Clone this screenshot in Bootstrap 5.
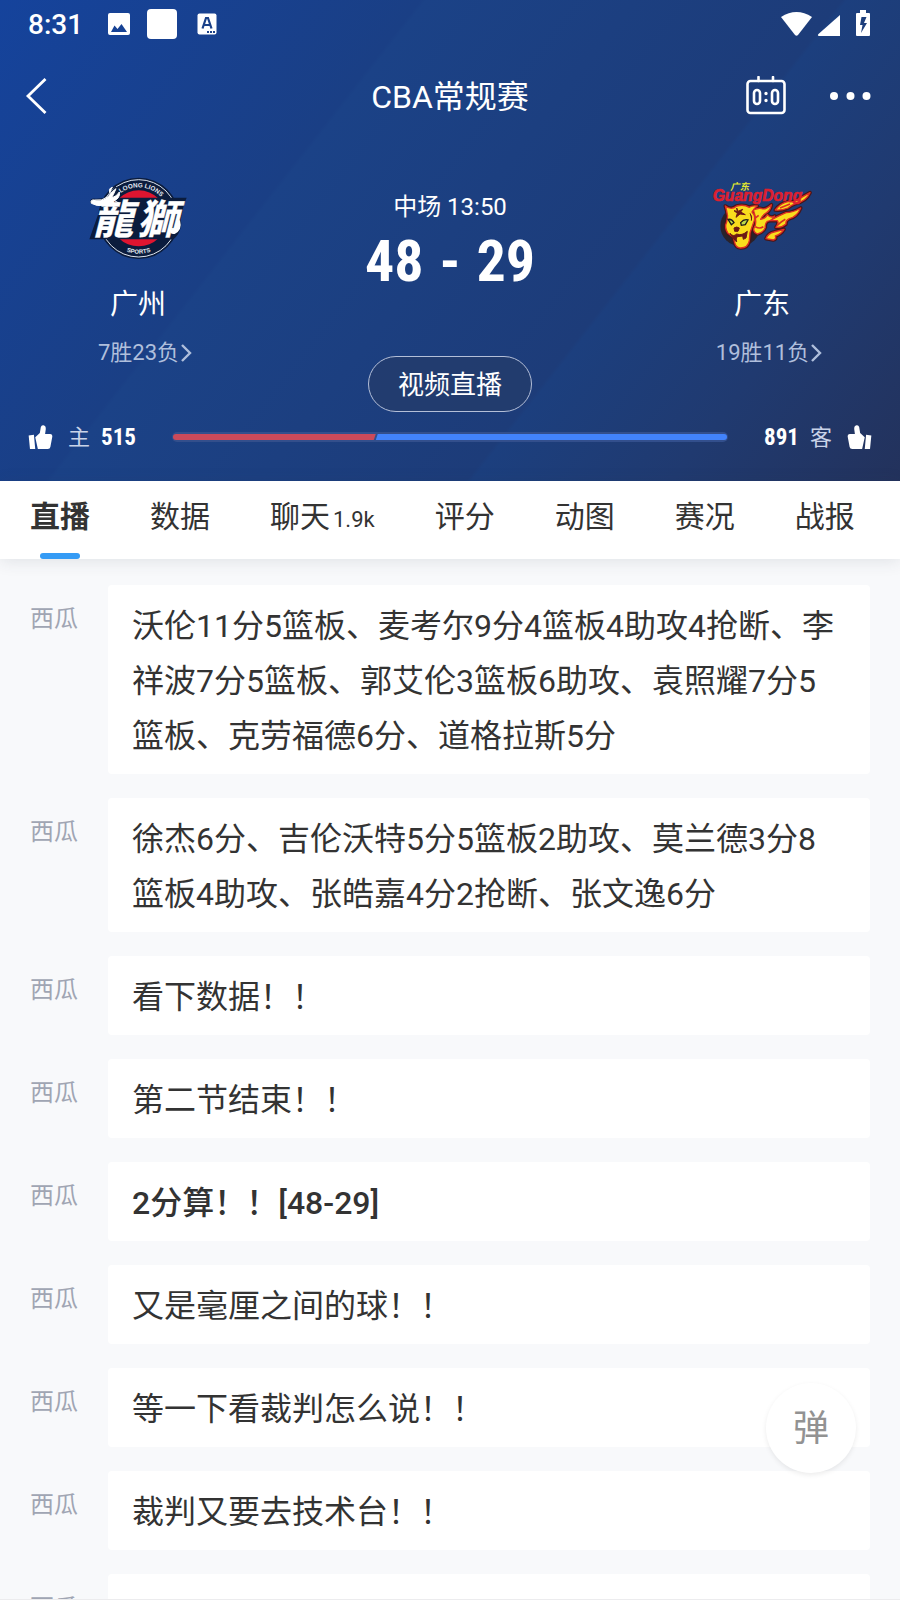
<!DOCTYPE html>
<html lang="zh-CN">
<head>
<meta charset="utf-8">
<meta name="viewport" content="width=device-width, initial-scale=1">
<title>CBA常规赛</title>
<link href="https://cdn.jsdelivr.net/npm/bootstrap@5.3.0/dist/css/bootstrap.min.css" rel="stylesheet">
<style>
  body { font-family: Roboto, "Noto Sans CJK SC", sans-serif; color: #333; background: #f8f9fb; }
  .match-head {
    background: linear-gradient(128deg, #15439c 0%, #1a3f85 33%, #1b4287 33.4%, #1d3c79 66%, #1c3f7e 66.4%, #203a70 82%, #23325c 100%);
  }
  .status-bar { height: 48px; padding: 0 30px 0 28px; }
  .clock { font-size: 28px; line-height: 32px; font-weight: 500; padding-top: 2px; }
  .app-mark { margin-left: 20px; }
  .title-bar { height: 98px; padding: 0 24px; }
  .title-bar h1 { font-size: 32px; line-height: 48px; }
  .title-side { flex: 1 1 0; }
  .icon-btn { background: none; border: 0; padding: 0; color: #fff; line-height: 0; }
  .title-bar .icon-btn { padding-bottom: 2px; }
  .score-btn { margin-right: 43px; }
  .more-btn { margin-right: 5px; }
  .versus { padding-top: 22px; }
  .team-col { width: 276px; }
  .team-name { font-size: 28px; line-height: 40px; margin-top: 17px; }
  .team-record { font-size: 22px; line-height: 32px; margin-top: 12px; padding-left: 14px; color: #b0bfdc; text-decoration: none; }
  .team-record svg { margin-left: 2px; }
  .period { font-size: 24px; line-height: 32px; padding-top: 23px; }
  .narrow-num { font-family: "Roboto Condensed", "Liberation Sans Narrow", sans-serif; font-weight: 700; }
  .score { font-size: 58px; line-height: 64px; margin-top: 6px; gap: 16px; }
  .video-btn {
    margin-top: 63px; width: 164px; height: 56px; padding: 1px 0 0; border-radius: 28px;
    border: 1px solid #b4bfd8; background: rgba(37, 60, 105, .7); color: #fff; font-size: 26px; line-height: 36px;
  }
  .video-btn:hover { background: #253c69; color: #fff; border-color: #fff; }
  .vote-row { margin-top: 8px; height: 34px; margin-bottom: 27px; }
  .vote-side { flex: 0 0 172px; padding-left: 28px; gap: 11px; font-size: 22px; line-height: 32px; }
  .vote-side.away { flex-direction: row-reverse; padding: 0 28px 0 0; }
  .vote-side .side-name { color: #c9d3e8; margin-left: 4px; padding-top: 1px; }
  .vote-side.away .side-name { margin: 0 4px 0 0; }
  .vote-side .narrow-num { font-size: 23px; padding-top: 1px; }
  .away .icon-btn svg { transform: scaleX(-1); }
  .vote-bar { height: 10px; padding: 2px 1px; border-radius: 5px; background: #334f8c; }
  .vote-home { background: #cb4a5a; border-radius: 3px 0 0 3px; clip-path: polygon(0 0, 100% 0, calc(100% - 2px) 100%, 0 100%); }
  .vote-away { background: #4283fb; border-radius: 0 3px 3px 0; clip-path: polygon(2px 0, 100% 0, 100% 100%, 0 100%); }
  .tab-strip { height: 78px; padding: 0 30px; gap: 60px; background: #fff; box-shadow: 0 2px 16px rgba(40, 55, 75, .12); z-index: 2; }
  .tab-strip a { font-size: 30px; line-height: 44px; padding-top: 14px; color: #333; text-decoration: none; white-space: nowrap; }
  .tab-strip a.active { font-weight: 700; }
  .tab-strip a.active::after { content: ""; position: absolute; bottom: 0; left: 10px; right: 10px; height: 6px; border-radius: 3px; background: #349bf5; }
  .tab-count { font-size: 22px; margin-left: 3px; }
  .feed { padding: 26px 30px 0; gap: 24px; overflow-y: auto; scrollbar-width: none; border-bottom: 1px solid #ececee; min-height: 0; }
  .feed::-webkit-scrollbar { display: none; }
  .feed-item { flex: none; gap: 30px; }
  .author { font-size: 24px; line-height: 36px; padding-top: 16px; color: #a0a5b3; white-space: nowrap; }
  .bubble { background: #fff; border-radius: 4px; padding: 14px 24px 10px; font-size: 32px; line-height: 55px; min-height: 79px; min-width: 0; }
  .scored { font-weight: 500; }
  .danmu-btn { right: 44px; bottom: 127px; width: 90px; height: 90px; border: 0; background: #fff; color: #929292; font-size: 36px; line-height: 88px; padding: 2px 0 0; box-shadow: 0 2px 5px rgba(0, 0, 0, .08); z-index: 3; }
</style>
</head>
<body>
<div class="vh-100 d-flex flex-column position-relative overflow-hidden">
  <header class="match-head text-white flex-shrink-0">
    <div class="status-bar d-flex align-items-center">
      <span class="clock">8:31</span>
      <svg class="ms-4" width="24" height="24" viewBox="0 0 24 24" fill="#fff" aria-hidden="true"><path fill-rule="evenodd" d="M3 1h18a2 2 0 0 1 2 2v18a2 2 0 0 1-2 2H3a2 2 0 0 1-2-2V3a2 2 0 0 1 2-2zM4 20h16l-5.500-8-4 5-3-3.500z"/></svg>
      <svg class="ms-3" width="30" height="30" aria-hidden="true"><rect width="30" height="30" rx="4" fill="#fff"/></svg>
      <svg class="app-mark" width="20" height="22" viewBox="0 0 20 22" aria-hidden="true"><rect x=".5" y=".5" width="19" height="21" rx="2" fill="#fff"/><path d="M5.500 15.500 9 5h2l3.500 10.500M7 12h6" fill="none" stroke="#1b4189" stroke-width="2.200"/><path d="M10 19h2m1 0h2m1 0h2" stroke="#1b4189" stroke-width="2"/></svg>
      <svg class="ms-auto" width="89" height="28" viewBox="0 0 89 28" fill="#fff" aria-hidden="true">
        <path d="M0 7Q15.500-3 31 7L17 25q-1.500 1.500-3 0z"/>
        <path d="M59 5v21H38q-2-.5-.5-2z"/>
        <path fill-rule="evenodd" d="M79 0h6v3h3q1 0 1 1v21q0 1-1 1H76q-1 0-1-1V4q0-1 1-1h3zM80.500 7l-1.500 8h2.500l-1.500 8 6-10h-3l2.500-6z"/>
      </svg>
    </div>

    <div class="title-bar d-flex align-items-center">
      <div class="title-side">
        <button class="icon-btn" type="button" aria-label="返回"><svg width="24" height="38" viewBox="0 0 24 38" fill="none" stroke="#fff" stroke-width="2.800"><path d="M21.500 2 4 19l17.500 17"/></svg></button>
      </div>
      <h1 class="m-0 fw-normal">CBA常规赛</h1>
      <div class="title-side d-flex align-items-center justify-content-end">
        <button class="icon-btn score-btn" type="button" aria-label="比分">
          <svg width="40" height="40" viewBox="0 0 40 40" fill="none" stroke="#fff" stroke-width="2.600" stroke-linecap="round"><rect x="1.500" y="5" width="37" height="32" rx="3"/><path d="M12.500 1v4M27 1v4"/><rect x="8" y="14" width="6" height="14" rx="3"/><rect x="26" y="14" width="6" height="14" rx="3"/><path d="M20 17.500v.1M20 24.500v.1" stroke-width="3.400"/></svg>
        </button>
        <button class="icon-btn more-btn" type="button" aria-label="更多">
          <svg width="42" height="10" viewBox="0 0 42 10" fill="#fff"><circle cx="5" cy="5" r="4"/><circle cx="21.500" cy="5" r="4"/><circle cx="37.500" cy="5" r="4"/></svg>
        </button>
      </div>
    </div>

    <div class="versus d-flex justify-content-between align-items-start">
      <div class="team-col d-flex flex-column align-items-center">
        <svg width="100" height="100" viewBox="54 24 300 300" role="img" aria-label="龍獅">
          <circle cx="206" cy="175" r="122" fill="#0b1c3d"/>
          <circle cx="206" cy="175" r="116" fill="none" stroke="#dfe5ee" stroke-width="3"/>
          <circle cx="206" cy="175" r="84" fill="#df1530"/>
          <path id="arcTop" d="M113 175a93 93 0 0 1 186 0" fill="none"/>
          <path id="arcBottom" d="M100 175a106 106 0 0 0 212 0" fill="none"/>
          <path d="M58 238l36-102q-22-2-34-8 0-16 18-12l30-2q18-22 28-34 16 4 12 24l-2 9h204l-8 20-10 46q6 18-8 44-14 20-22 15z" fill="#0b1c3d"/>
          <g font-family="Noto Sans CJK TC, sans-serif" font-weight="700" font-style="italic" fill="#fff" stroke="#fff" stroke-width="1">
            <text x="68" y="222" font-size="122">龍</text>
            <text x="202" y="222" font-size="122">獅</text>
          </g>
          <g fill="#e6ebf3" font-family="Liberation Sans, sans-serif" font-weight="700" text-anchor="middle">
            <text font-size="19"><textPath href="#arcTop" startOffset="53%">LOONG LIONS</textPath></text>
            <text font-size="18"><textPath href="#arcBottom" startOffset="50%">SPORTS</textPath></text>
          </g>
          <path d="M64 130q-4-12 10-10 22 4 40-10 14-18 24-24-8 20-14 28 16-4 24-18 4 20-20 28l-26 12q-22 4-38-6zM120 100q-6-16 8-18M130 120l18 10" fill="#fff" stroke="#fff" stroke-width="3"/>
          <path d="M330 180q8 30-16 42-16 2-14-14 12 4 16-6-2-14 14-22z" fill="#fff"/>
        </svg>
        <div class="team-name">广州</div>
        <a class="team-record d-flex align-items-center" href="#">7胜23负<svg width="11" height="18" viewBox="0 0 11 18" fill="none" stroke="currentColor" stroke-width="2.400"><path d="M1 1l8 8-8 8"/></svg></a>
      </div>

      <div class="d-flex flex-column align-items-center">
        <div class="period">中场 13:50</div>
        <div class="score narrow-num d-flex"><span>48</span><span>-</span><span>29</span></div>
        <button class="btn video-btn" type="button">视频直播</button>
      </div>

      <div class="team-col d-flex flex-column align-items-center">
        <svg width="100" height="100" viewBox="66 24 300 300" role="img" aria-label="GuangDong">
          <circle cx="151" cy="198" r="60" fill="#28222b"/>
          <g stroke-linejoin="round">
            <g fill="#f9dd1d" stroke="#471518" stroke-width="11">
              <path id="flames" d="M190 150q18-8 26-4 10 4 28-12-2 16-14 24-14 8-18 20 14-2 20-14 10 12 22 4-8 14-22 16-8 8-6 18-4 14-24 20-18-8-6-26 4-20-6-46zM256 150q14-20 40-26 8 4 22-2 24-14 42-24-12 26-42 32-16 6-24 14-20 8-38 6zM240 182q24-14 48-24 20 0 44-14-10 26-34 32-12 6-10 16-14 12-30 10 10-14 4-20zM228 236q6-16 24-20l30-8q-8 14-26 20 4 10-6 12z"/>
              <path id="tigerHead" d="M106 138q18 14 34 0 22-6 38 4 8-6 24-4-12 8-16 18 14 14 4 34l-10 28-2 24q-4 22-26 22-14 0-18-16l-4-16-16-12q-12-18-4-34 4-18 2-22-2-14-6-26z"/>
            </g>
            <g fill="#f9dd1d" stroke="#df3024" stroke-width="4"><use href="#flames"/><use href="#tigerHead"/></g>
          </g>
          <path d="M114 178q12-2 18 10l-8 6zM152 188q10-12 22-8l-8 14-12 2z" fill="#bddb4a" stroke="#1d1b1b" stroke-width="4"/>
          <path d="M132 204q8-6 16 0l-4 10h-10zM120 220q10 12 20 2 16 6 32-8l-4 20-8 4-2-10-16 2-6 10-6-4zM132 238l6-4 2 12zM140 144l4 10 14-6-6 8 14 8-16-2-12 10 4-12-10-8 10 2zM180 160q8 10 4 22" fill="#6b1815" stroke="#6b1815" stroke-width="3"/>
          <path d="M196 200q14 8 24 0M194 176l12-10M262 196q10-10 24-18M270 144l30-12" fill="none" stroke="#d93022" stroke-width="5"/>
          <text x="68" y="124" font-family="Liberation Sans, sans-serif" font-size="47" font-weight="700" font-style="italic" fill="#dc2030" stroke="#dc2030" stroke-width="2">GuangDong</text>
          <text x="121" y="89" font-family="Noto Sans CJK SC, sans-serif" font-size="28" font-weight="700" font-style="italic" fill="#e3e82e">广东</text>
        </svg>
        <div class="team-name">广东</div>
        <a class="team-record d-flex align-items-center" href="#">19胜11负<svg width="11" height="18" viewBox="0 0 11 18" fill="none" stroke="currentColor" stroke-width="2.400"><path d="M1 1l8 8-8 8"/></svg></a>
      </div>
    </div>

    <div class="vote-row d-flex align-items-center">
      <div class="vote-side d-flex align-items-center">
        <button class="icon-btn" type="button" aria-label="支持主队"><svg width="25" height="25" viewBox="84 464 76 76" fill="#fff"><path d="M86 496l16-2 4 43H90zM106 501l14-13 3-18q2-6 8-5 8 2 7 12l-2 14h16q7 1 6 8l-6 32q-1 6-8 6h-30z"/></svg></button>
        <span class="side-name">主</span><span class="narrow-num">515</span>
      </div>
      <div class="vote-bar d-flex flex-grow-1">
        <div class="vote-home" style="width:36.6%"></div>
        <div class="vote-away flex-grow-1"></div>
      </div>
      <div class="vote-side away d-flex align-items-center">
        <button class="icon-btn" type="button" aria-label="支持客队"><svg width="25" height="25" viewBox="84 464 76 76" fill="#fff"><path d="M86 496l16-2 4 43H90zM106 501l14-13 3-18q2-6 8-5 8 2 7 12l-2 14h16q7 1 6 8l-6 32q-1 6-8 6h-30z"/></svg></button>
        <span class="side-name">客</span><span class="narrow-num">891</span>
      </div>
    </div>
  </header>

  <nav class="tab-strip d-flex flex-shrink-0 position-relative">
    <a class="active position-relative" href="#" aria-current="page">直播</a>
    <a href="#">数据</a>
    <a href="#">聊天<span class="tab-count">1.9k</span></a>
    <a href="#">评分</a>
    <a href="#">动图</a>
    <a href="#">赛况</a>
    <a href="#">战报</a>
  </nav>

  <main class="feed d-flex flex-column flex-grow-1">
    <article class="feed-item d-flex"><span class="author">西瓜</span><div class="bubble flex-grow-1">沃伦11分5篮板、麦考尔9分4篮板4助攻4抢断、李祥波7分5篮板、郭艾伦3篮板6助攻、袁照耀7分5篮板、克劳福德6分、道格拉斯5分</div></article>
    <article class="feed-item d-flex"><span class="author">西瓜</span><div class="bubble flex-grow-1">徐杰6分、吉伦沃特5分5篮板2助攻、莫兰德3分8篮板4助攻、张皓嘉4分2抢断、张文逸6分</div></article>
    <article class="feed-item d-flex"><span class="author">西瓜</span><div class="bubble flex-grow-1">看下数据！！</div></article>
    <article class="feed-item d-flex"><span class="author">西瓜</span><div class="bubble flex-grow-1">第二节结束！！</div></article>
    <article class="feed-item d-flex"><span class="author">西瓜</span><div class="bubble scored flex-grow-1">2分算！！[48-29]</div></article>
    <article class="feed-item d-flex"><span class="author">西瓜</span><div class="bubble flex-grow-1">又是毫厘之间的球！！</div></article>
    <article class="feed-item d-flex"><span class="author">西瓜</span><div class="bubble flex-grow-1">等一下看裁判怎么说！！</div></article>
    <article class="feed-item d-flex"><span class="author">西瓜</span><div class="bubble flex-grow-1">裁判又要去技术台！！</div></article>
    <article class="feed-item d-flex"><span class="author">西瓜</span><div class="bubble flex-grow-1"></div></article>
  </main>

  <button class="danmu-btn position-absolute rounded-circle" type="button" aria-label="弹幕">弹</button>
</div>
<script src="https://cdn.jsdelivr.net/npm/bootstrap@5.3.0/dist/js/bootstrap.bundle.min.js"></script>
</body>
</html>
